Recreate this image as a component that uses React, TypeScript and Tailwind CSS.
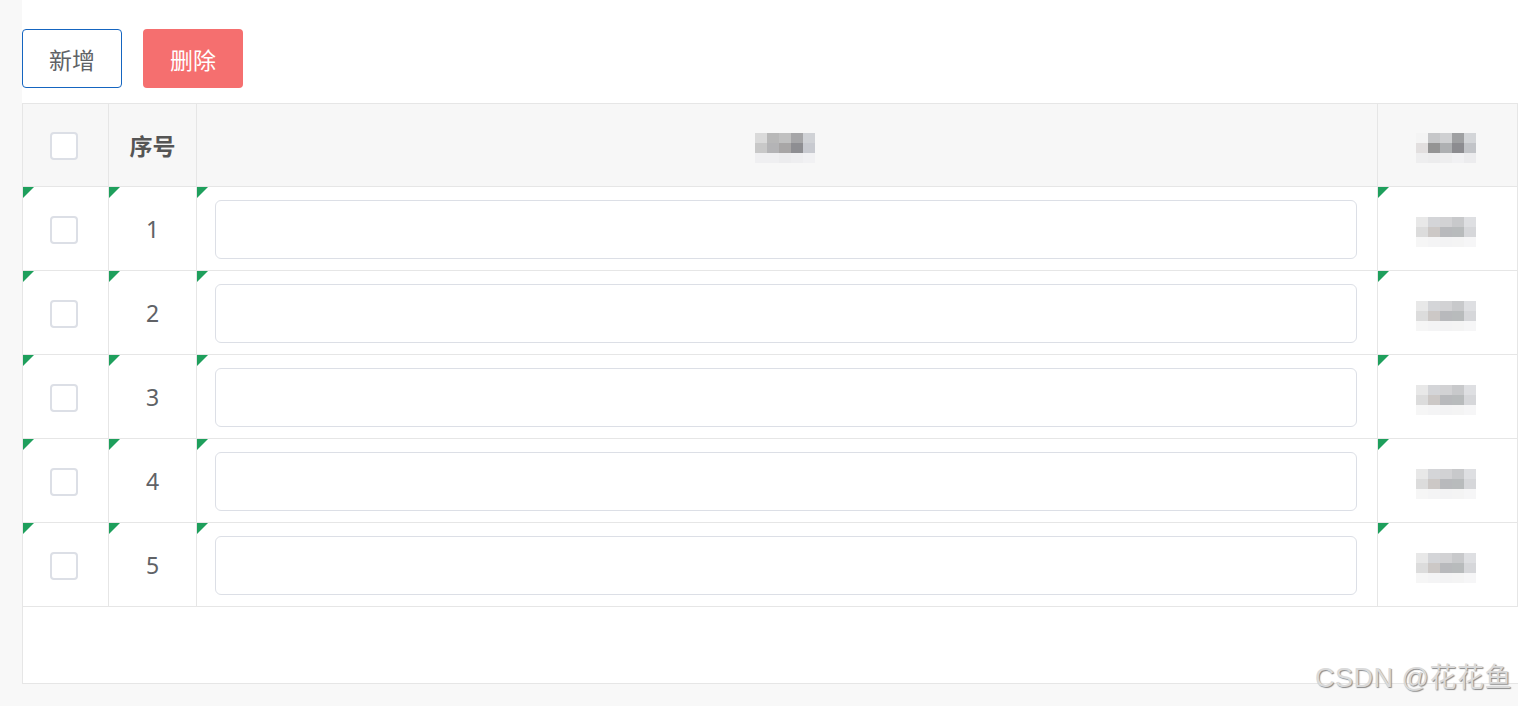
import React from 'react';

const headMosaic = [
  ['#dadada', '#b8b8b8', '#c0c0c0', '#a6a6a8', '#d0d2d6'],
  ['#c8c8c8', '#b4b4b6', '#a8a6a6', '#8e8e92', '#c8cad0'],
  ['#efeff1', '#efeff1', '#ececee', '#eeeef0', '#f1f1f3'],
];

const sideHeadMosaic = [
  ['#f4f4f4', '#c6c7c9', '#cfd0d2', '#9fa0a2', '#d3d5d8'],
  ['#e2dfdf', '#949494', '#aeb0b2', '#8c8c90', '#c2c4c8'],
  ['#eeeeef', '#ececed', '#eeeeef', '#f1f1f3', '#ececee'],
];

const rowMosaic = [
  ['#e8e8e8', '#d4d5d8', '#d2d2d4', '#c8c9cb', '#dedfe2'],
  ['#dcdcdc', '#ccc8c6', '#b8b9bc', '#b8bbbc', '#d6d7da'],
  ['#f6f6f6', '#f4f4f5', '#f3f3f4', '#f4f4f4', '#f6f6f7'],
];

function Mosaic({ cells }: { cells: string[][] }) {
  return (
    <div className="flex flex-col mt-[4px] mr-[4px]">
      {cells.map((row, i) => (
        <div key={i} className="flex">
          {row.map((c, j) => (
            <div key={j} className="w-[12px] h-[10px]" style={{ backgroundColor: c }} />
          ))}
        </div>
      ))}
    </div>
  );
}

function Checkbox() {
  return <div className="w-[28px] h-[28px] mr-[4px] rounded-[4px] border-2 border-[#dcdfe6] bg-white" />;
}

function Flag() {
  return (
    <svg className="absolute left-0 top-0" width="11" height="11" viewBox="0 0 11 11">
      <path d="M0 0H11L0 11Z" fill="#1e9f5c" />
    </svg>
  );
}

const cell = 'relative flex items-center justify-center border-r border-b border-[#e6e6e6] h-[84px] pt-[2px]';
const head = 'relative flex items-center justify-center border-r border-b border-[#e6e6e6] h-[83px] pt-[2px]';

export default function App() {
  const rows = [1, 2, 3, 4, 5];
  return (
    <div className="relative min-h-screen bg-[#f8f8f8] pl-[22px] font-['Noto_Sans','Noto_Sans_CJK_SC',sans-serif]">
      <div className="bg-white h-[684px] overflow-hidden pt-[29px]">
        <div className="flex gap-[21px]">
          <button className="w-[100px] h-[59px] pt-[3px] rounded-[4px] border border-[#1565c0] bg-white text-[23px] text-[#606266]">
            新增
          </button>
          <button className="w-[100px] h-[59px] pt-[3px] rounded-[4px] bg-[#f56f6f] text-[23px] text-white">
            删除
          </button>
        </div>

        <div className="mt-[15px] w-[1620px] h-[581px] border-t border-l border-b border-[#e6e6e6]">
          <div className="grid grid-cols-[86px_88px_1181px_140px_125px] bg-[#f7f7f7]">
            <div className={head}>
              <Checkbox />
            </div>
            <div className={head + ' text-[23px] font-bold text-[#555]'}>序号</div>
            <div className={head}>
              <Mosaic cells={headMosaic} />
            </div>
            <div className={head}>
              <Mosaic cells={sideHeadMosaic} />
            </div>
            <div className={head} />
          </div>
          {rows.map((n) => (
            <div key={n} className="grid grid-cols-[86px_88px_1181px_140px_125px] bg-white">
              <div className={cell}>
                <Flag />
                <Checkbox />
              </div>
              <div className={cell + ' text-[23px] text-[#606266]'}>
                <Flag />
                {n}
              </div>
              <div className={cell + ' pl-[18px] pr-[20px]'}>
                <Flag />
                <div className="w-full h-[59px] rounded-[6px] border border-[#dcdfe6] bg-white" />
              </div>
              <div className={cell}>
                <Flag />
                <Mosaic cells={rowMosaic} />
              </div>
              <div className={cell}>
                <Flag />
              </div>
            </div>
          ))}
        </div>
      </div>

      <div className="absolute right-[6px] top-[658px] text-[27px] text-[#dadada] [text-shadow:1px_1px_1px_#8a8a8a] font-['Liberation_Sans','Noto_Sans_CJK_SC',sans-serif] tracking-[0.5px] whitespace-nowrap">
        CSDN @花花鱼
      </div>
    </div>
  );
}
